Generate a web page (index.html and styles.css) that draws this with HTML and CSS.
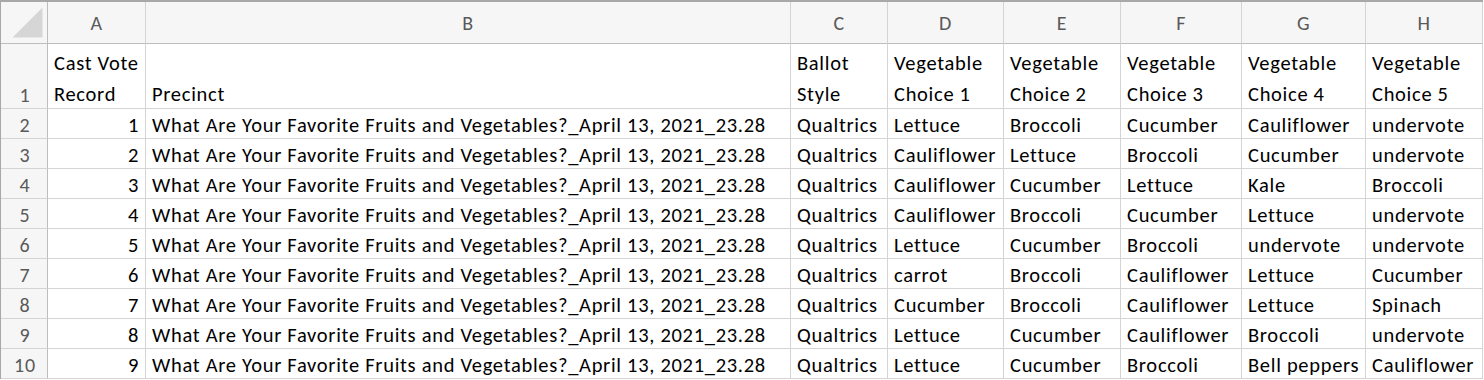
FILE: index.html
```html
<!DOCTYPE html>
<html>
<head>
<meta charset="utf-8">
<link rel="stylesheet" href="styles.css">
</head>
<body>
<div class="sheet">
  <div class="corner"><span class="tri"></span></div>
  <div class="colhead">A</div>
  <div class="colhead">B</div>
  <div class="colhead">C</div>
  <div class="colhead">D</div>
  <div class="colhead">E</div>
  <div class="colhead">F</div>
  <div class="colhead">G</div>
  <div class="colhead">H</div>

  <div class="rowhead tall">1</div>
  <div class="cell tall">Cast Vote<br>Record</div>
  <div class="cell tall single">Precinct</div>
  <div class="cell tall">Ballot<br>Style</div>
  <div class="cell tall">Vegetable<br>Choice 1</div>
  <div class="cell tall">Vegetable<br>Choice 2</div>
  <div class="cell tall">Vegetable<br>Choice 3</div>
  <div class="cell tall">Vegetable<br>Choice 4</div>
  <div class="cell tall">Vegetable<br>Choice 5</div>

  <div class="rowhead">2</div>
  <div class="cell num">1</div>
  <div class="cell">What Are Your Favorite Fruits and Vegetables?_April 13, 2021_23.28</div>
  <div class="cell">Qualtrics</div>
  <div class="cell">Lettuce</div>
  <div class="cell">Broccoli</div>
  <div class="cell">Cucumber</div>
  <div class="cell">Cauliflower</div>
  <div class="cell">undervote</div>

  <div class="rowhead">3</div>
  <div class="cell num">2</div>
  <div class="cell">What Are Your Favorite Fruits and Vegetables?_April 13, 2021_23.28</div>
  <div class="cell">Qualtrics</div>
  <div class="cell">Cauliflower</div>
  <div class="cell">Lettuce</div>
  <div class="cell">Broccoli</div>
  <div class="cell">Cucumber</div>
  <div class="cell">undervote</div>

  <div class="rowhead">4</div>
  <div class="cell num">3</div>
  <div class="cell">What Are Your Favorite Fruits and Vegetables?_April 13, 2021_23.28</div>
  <div class="cell">Qualtrics</div>
  <div class="cell">Cauliflower</div>
  <div class="cell">Cucumber</div>
  <div class="cell">Lettuce</div>
  <div class="cell">Kale</div>
  <div class="cell">Broccoli</div>

  <div class="rowhead">5</div>
  <div class="cell num">4</div>
  <div class="cell">What Are Your Favorite Fruits and Vegetables?_April 13, 2021_23.28</div>
  <div class="cell">Qualtrics</div>
  <div class="cell">Cauliflower</div>
  <div class="cell">Broccoli</div>
  <div class="cell">Cucumber</div>
  <div class="cell">Lettuce</div>
  <div class="cell">undervote</div>

  <div class="rowhead">6</div>
  <div class="cell num">5</div>
  <div class="cell">What Are Your Favorite Fruits and Vegetables?_April 13, 2021_23.28</div>
  <div class="cell">Qualtrics</div>
  <div class="cell">Lettuce</div>
  <div class="cell">Cucumber</div>
  <div class="cell">Broccoli</div>
  <div class="cell">undervote</div>
  <div class="cell">undervote</div>

  <div class="rowhead">7</div>
  <div class="cell num">6</div>
  <div class="cell">What Are Your Favorite Fruits and Vegetables?_April 13, 2021_23.28</div>
  <div class="cell">Qualtrics</div>
  <div class="cell">carrot</div>
  <div class="cell">Broccoli</div>
  <div class="cell">Cauliflower</div>
  <div class="cell">Lettuce</div>
  <div class="cell">Cucumber</div>

  <div class="rowhead">8</div>
  <div class="cell num">7</div>
  <div class="cell">What Are Your Favorite Fruits and Vegetables?_April 13, 2021_23.28</div>
  <div class="cell">Qualtrics</div>
  <div class="cell">Cucumber</div>
  <div class="cell">Broccoli</div>
  <div class="cell">Cauliflower</div>
  <div class="cell">Lettuce</div>
  <div class="cell">Spinach</div>

  <div class="rowhead">9</div>
  <div class="cell num">8</div>
  <div class="cell">What Are Your Favorite Fruits and Vegetables?_April 13, 2021_23.28</div>
  <div class="cell">Qualtrics</div>
  <div class="cell">Lettuce</div>
  <div class="cell">Cucumber</div>
  <div class="cell">Cauliflower</div>
  <div class="cell">Broccoli</div>
  <div class="cell">undervote</div>

  <div class="rowhead">10</div>
  <div class="cell num">9</div>
  <div class="cell">What Are Your Favorite Fruits and Vegetables?_April 13, 2021_23.28</div>
  <div class="cell">Qualtrics</div>
  <div class="cell">Lettuce</div>
  <div class="cell">Cucumber</div>
  <div class="cell">Broccoli</div>
  <div class="cell">Bell peppers</div>
  <div class="cell">Cauliflower</div>
</div>
</body>
</html>
```
FILE: styles.css
```css
html, body {
  margin: 0;
  padding: 0;
  background: #ffffff;
}

.sheet {
  display: grid;
  grid-template-columns: 47px 98px 645px 97px 116px 117px 121px 124px 117px;
  grid-template-rows: 42px 65px repeat(9, 30px);
  width: 1482px;
  border-top: 2px solid #a8a8a8;
  border-left: 1px solid #a8a8a8;
  box-sizing: content-box;
  font-family: Carlito, "Lato", "Liberation Sans", sans-serif;
  font-size: 20.5px;
  color: #000;
}

.sheet > div {
  box-sizing: border-box;
  border-right: 1px solid #d4d4d4;
  border-bottom: 1px solid #d4d4d4;
  white-space: nowrap;
  overflow: hidden;
}

.corner {
  background: #f6f6f6;
  border-right: 1px solid #bdbdbd !important;
  border-bottom: 1px solid #bdbdbd !important;
  display: flex;
  align-items: center;
  justify-content: center;
}

.tri {
  width: 30px;
  height: 30px;
  background: #d6d6d6;
  clip-path: polygon(100% 0, 100% 100%, 0 100%);
  margin-left: 7px;
}

.colhead {
  background: #f6f6f6;
  color: #5a5a5a;
  border-bottom: 1px solid #bdbdbd !important;
  display: flex;
  align-items: center;
  justify-content: center;
  font-size: 20px;
  letter-spacing: 0.5px;
}

.rowhead {
  background: #f6f6f6;
  color: #5a5a5a;
  border-right: 1px solid #bdbdbd !important;
  display: flex;
  align-items: center;
  justify-content: center;
  padding: 2px 0 0 2px;
  font-size: 20px;
  letter-spacing: 0.8px;
}

.rowhead.tall {
  align-items: flex-end;
  padding: 0 0 1px 2px;
}

.cell {
  display: flex;
  align-items: center;
  padding: 2px 5px 0 6px;
  letter-spacing: 0.7px;
}

.cell.tall {
  align-items: flex-start;
  line-height: 31px;
  padding: 4px 5px 0 6px;
}

.cell.tall.single {
  padding-top: 35px;
}

.num {
  justify-content: flex-end;
  padding-right: 6px;
}
```
